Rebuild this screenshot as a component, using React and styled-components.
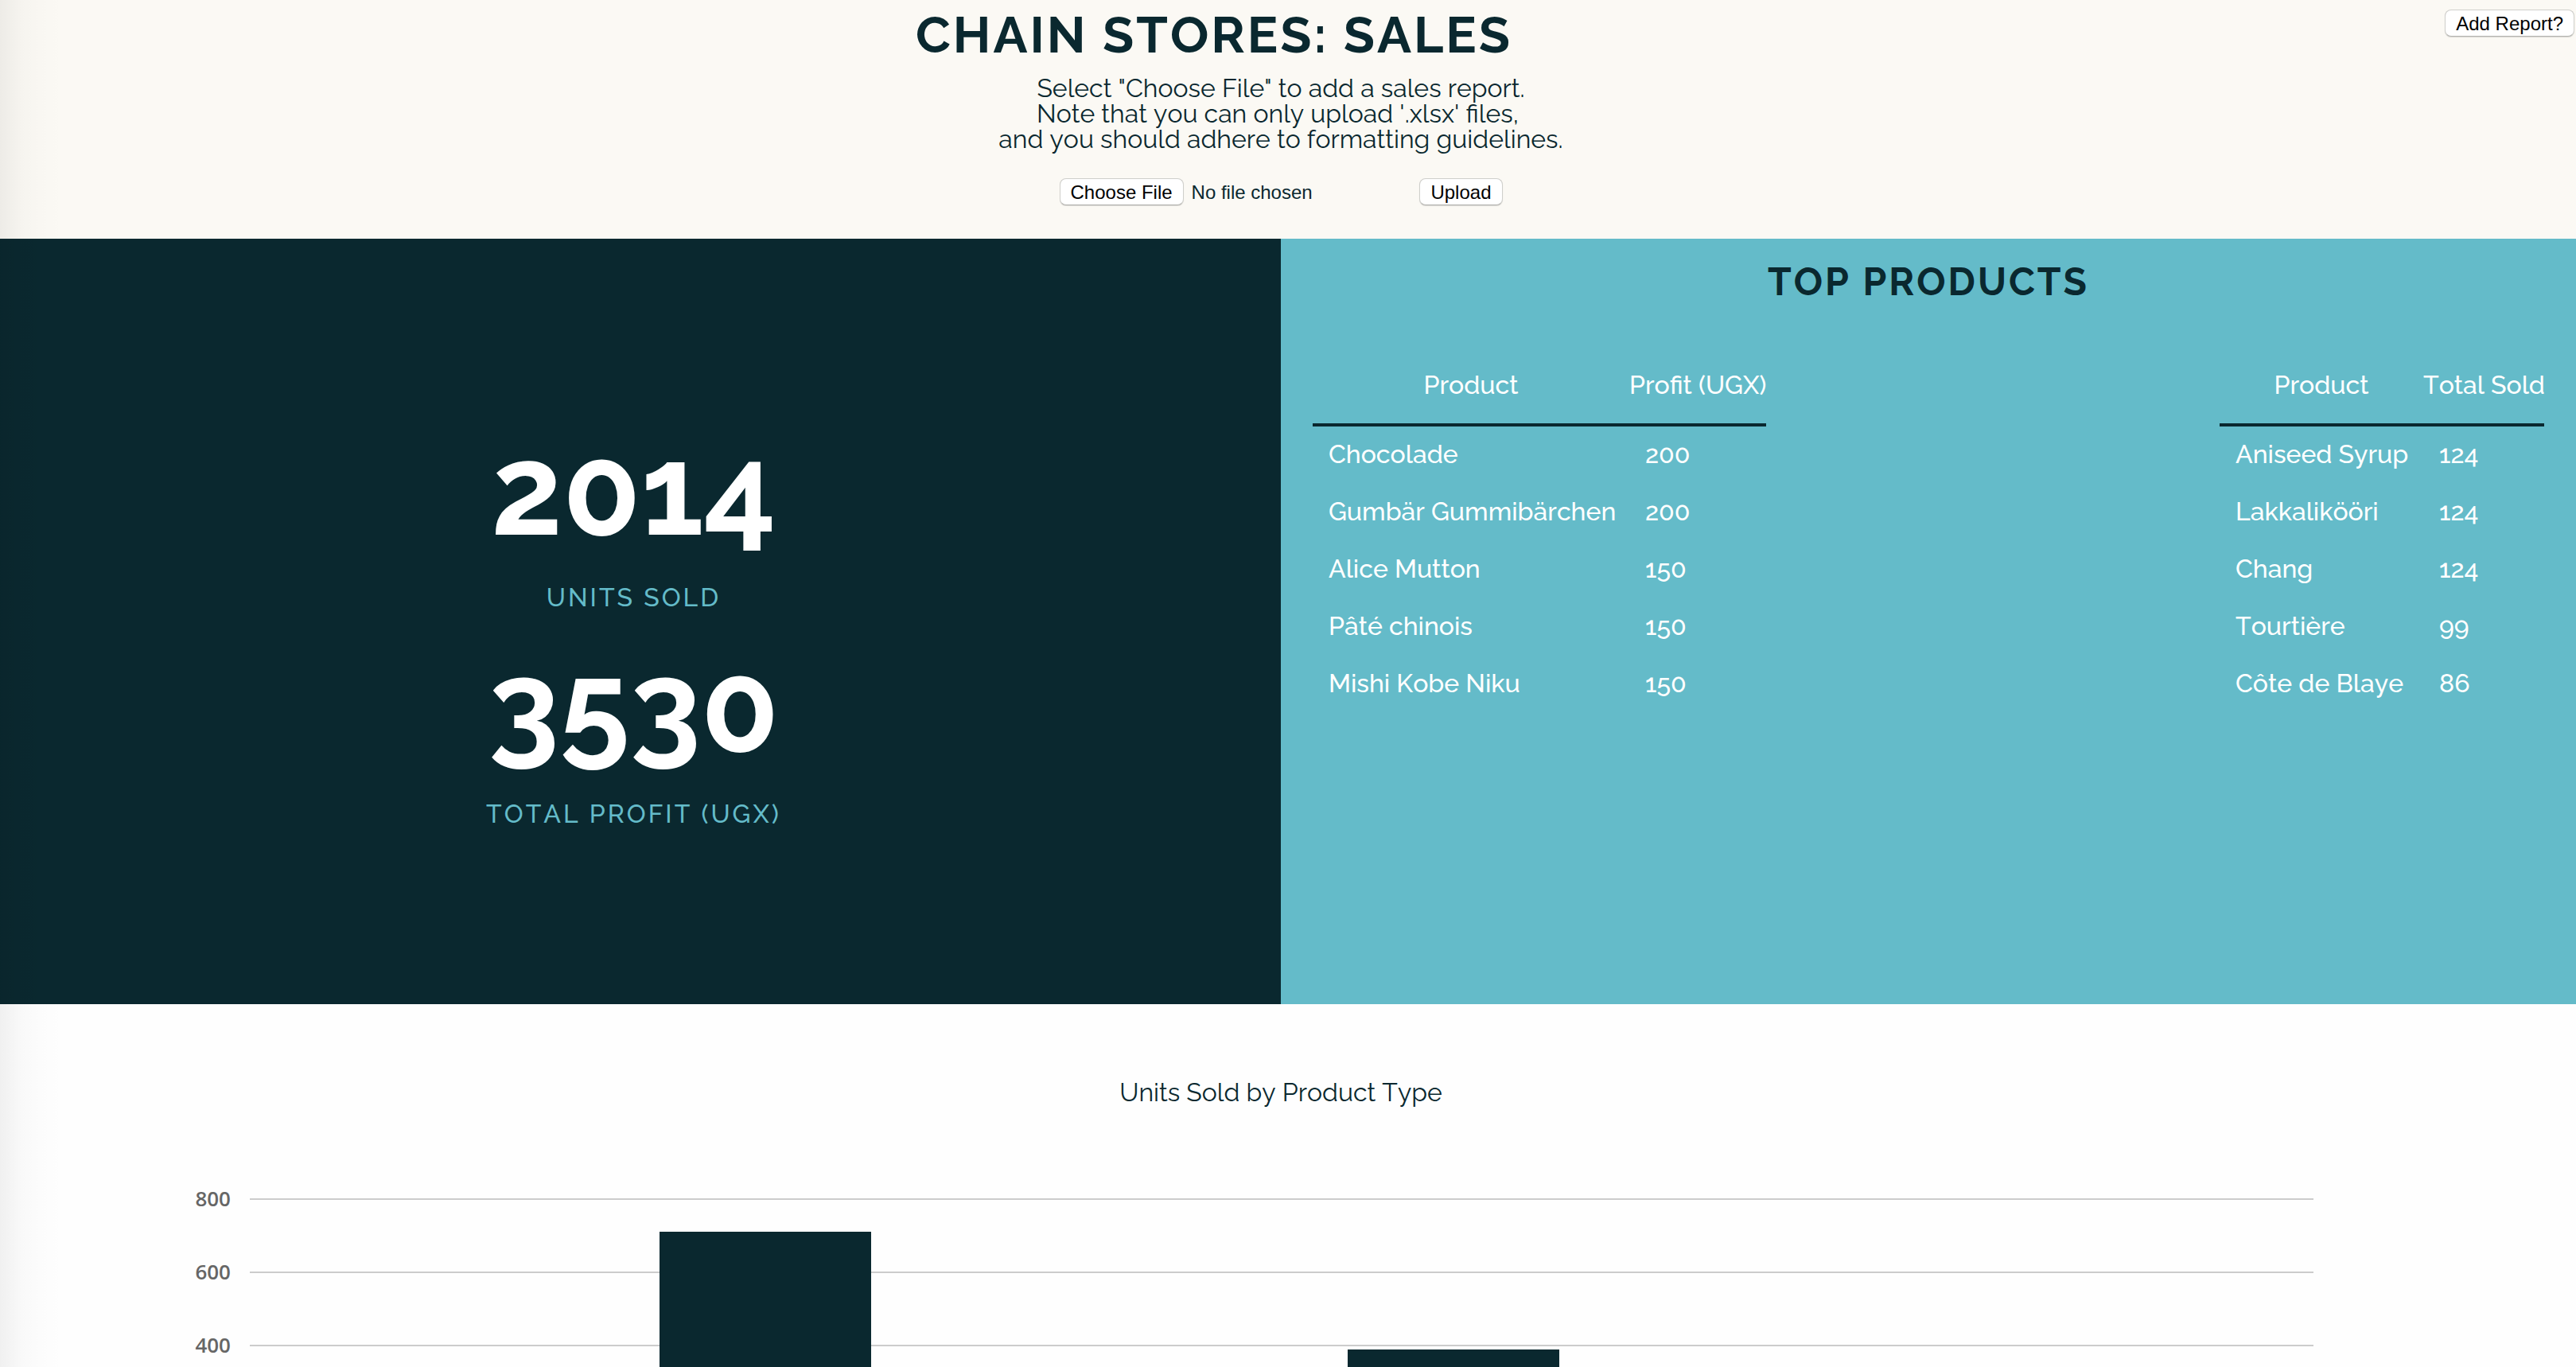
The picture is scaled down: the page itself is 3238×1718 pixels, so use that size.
import React from "react";
import styled, { createGlobalStyle } from "styled-components";

const color = {
  ink: "#0a282f",
  teal: "#64bbc9",
  cream: "#fbf9f4",
  paper: "#fefefe",
};

const brand = `Raleway, Lato, "Open Sans", sans-serif`;
const system = `"Helvetica Neue", "Liberation Sans", Arial, sans-serif`;

const GlobalStyle = createGlobalStyle`
  *, *::before, *::after { box-sizing: border-box; }
  body {
    margin: 0;
    background: ${color.paper};
    color: ${color.ink};
    font-family: ${brand};
    font-size: 32px;
    line-height: 32px;
    font-kerning: none;
  }
`;

const Page = styled.div`
  position: relative;
  display: flex;
  flex-direction: column;
  height: 100vh;
  overflow: hidden;
`;

const EdgeShade = styled.div`
  position: absolute;
  inset: 0 auto 0 0;
  width: 80px;
  pointer-events: none;
  background: linear-gradient(
    to right,
    rgba(0, 0, 0, 0.055),
    rgba(0, 0, 0, 0.02) 35%,
    rgba(0, 0, 0, 0.006) 65%,
    transparent
  );
`;

const Header = styled.header`
  flex: none;
  display: grid;
  align-items: start;
  height: 300px;
  background: ${color.cream};
`;

const Intro = styled.div`
  grid-area: 1 / 1;
  display: flex;
  flex-direction: column;
  align-items: center;
  padding: 12px 18px 0 0;
`;

const Title = styled.h1`
  margin: 0 168px 19px 0;
  font-size: 64px;
  line-height: 64px;
  font-weight: 700;
  letter-spacing: 3px;
  text-transform: uppercase;
`;

const Note = styled.p`
  margin: 0 0 33px;
  text-align: center;
`;

const UploadForm = styled.form`
  display: flex;
  justify-content: space-between;
  align-items: center;
  width: 557px;
`;

const buttonLook = `
  height: 34px;
  margin: 0;
  padding: 1px 13px 0;
  border: 1px solid #cfcfcb;
  border-bottom-color: #b4b4b0;
  border-radius: 8px;
  background: #fff;
  box-shadow: 0 1px 1px rgba(0, 0, 0, 0.15);
  color: #000;
  font: 24px/30px ${system};
`;

const Button = styled.button`
  ${buttonLook}
`;

const FileInput = styled.input`
  width: 440px;
  color: ${color.ink};
  font: 24px/34px ${system};

  &::file-selector-button {
    ${buttonLook}
    margin-right: 10px;
  }
`;

const Corner = styled.div`
  grid-area: 1 / 1;
  justify-self: end;
  padding: 12px 2px 0 0;
  display: flex;
`;

const Summary = styled.section`
  flex: none;
  display: grid;
  grid-template-columns: 1610fr 1628fr;
  height: 962px;
`;

const Totals = styled.div`
  display: flex;
  flex-direction: column;
  align-items: center;
  gap: 41px;
  padding: 236px 17px 0 0;
  background: ${color.ink};
`;

const Figure = styled.div`
  display: flex;
  flex-direction: column;
  align-items: center;
  gap: 39px;
`;

const FigureValue = styled.strong`
  color: #fff;
  font-size: 160px;
  line-height: 160px;
  font-weight: 700;
`;

const FigureLabel = styled.span`
  color: ${color.teal};
  font-weight: 500;
  letter-spacing: 3px;
  text-transform: uppercase;
`;

const Top = styled.div`
  padding: 30px 40px 0;
  background: ${color.teal};
`;

const TopTitle = styled.h2`
  margin: 0 0 82px;
  font-size: 48px;
  line-height: 48px;
  font-weight: 700;
  letter-spacing: 3px;
  text-align: center;
  text-transform: uppercase;
`;

const Tables = styled.div`
  display: flex;
  justify-content: space-between;
  align-items: flex-start;
`;

const Table = styled.table`
  width: ${(p) => p.$width}px;
  table-layout: fixed;
  border-spacing: 0;
  color: #fff;
  font-weight: 500;
`;

const HeadCell = styled.th`
  width: ${(p) => (p.$width ? `${p.$width}px` : "auto")};
  padding: 8px 0 32px;
  border-bottom: 4px solid ${color.ink};
  font-weight: inherit;
  text-align: center;
  white-space: nowrap;
`;

const Cell = styled.td`
  padding: 19px 20px 21px;
  white-space: nowrap;
`;

const Chart = styled.section`
  flex: 1;
  min-height: 0;
  overflow: hidden;
  padding: 95px 330px 0 228px;
`;

const ChartTitle = styled.h3`
  margin: 0 0 101px;
  padding-left: 84px;
  font-size: 32px;
  line-height: 32px;
  font-weight: 400;
  text-align: center;
`;

const ChartBody = styled.div`
  display: grid;
  grid-template-columns: 62px 1fr;
  column-gap: 24px;
`;

const Axis = styled.div`
  display: flex;
  flex-direction: column;
  color: #666;
  font: 600 26px/32px "Open Sans", sans-serif;
  text-align: right;
`;

const Tick = styled.span`
  height: 92px;
`;

const Plot = styled.div`
  display: grid;
  padding-top: 16px;
`;

const Lines = styled.div`
  grid-area: 1 / 1;
`;

const Line = styled.div`
  height: 92px;
  border-top: 2px solid #ccc;
`;

const Bars = styled.div`
  grid-area: 1 / 1;
  display: grid;
  grid-template-columns: repeat(6, 1fr);
  justify-items: center;
  align-items: end;
  height: 368px;
`;

const Bar = styled.div`
  width: 266px;
  background: ${color.ink};
`;

const profitRows = [
  ["Chocolade", 200],
  ["Gumbär Gummibärchen", 200],
  ["Alice Mutton", 150],
  ["Pâté chinois", 150],
  ["Mishi Kobe Niku", 150],
];

const soldRows = [
  ["Aniseed Syrup", 124],
  ["Lakkalikööri", 124],
  ["Chang", 124],
  ["Tourtière", 99],
  ["Côte de Blaye", 86],
];

const ticks = [800, 600, 400];
const unitsByType = [260, 708, 215, 387, 240, 200];

function ProductTable({ measure, rows, width, nameWidth }) {
  return (
    <Table $width={width}>
      <thead>
        <tr>
          <HeadCell scope="col" $width={nameWidth}>Product</HeadCell>
          <HeadCell scope="col">{measure}</HeadCell>
        </tr>
      </thead>
      <tbody>
        {rows.map(([name, value]) => (
          <tr key={name}>
            <Cell>{name}</Cell>
            <Cell>{value}</Cell>
          </tr>
        ))}
      </tbody>
    </Table>
  );
}

export default function App() {
  return (
    <Page>
      <GlobalStyle />
      <Header>
        <Intro>
          <Title>Chain Stores: Sales</Title>
          <Note>
            Select "Choose File" to add a sales report.
            <br />
            Note that you can only upload '.xlsx' files,&nbsp;
            <br />
            and you should adhere to formatting guidelines.
          </Note>
          <UploadForm onSubmit={(e) => e.preventDefault()}>
            <FileInput type="file" accept=".xlsx" aria-label="Sales report" />
            <Button type="submit">Upload</Button>
          </UploadForm>
        </Intro>
        <Corner>
          <Button type="button">Add Report?</Button>
        </Corner>
      </Header>

      <Summary>
        <Totals>
          <Figure>
            <FigureValue>2014</FigureValue>
            <FigureLabel>Units Sold</FigureLabel>
          </Figure>
          <Figure>
            <FigureValue>3530</FigureValue>
            <FigureLabel>Total Profit (UGX)</FigureLabel>
          </Figure>
        </Totals>
        <Top>
          <TopTitle>Top Products</TopTitle>
          <Tables>
            <ProductTable measure="Profit (UGX)" rows={profitRows} width={570} nameWidth={398} />
            <ProductTable measure="Total Sold" rows={soldRows} width={408} nameWidth={256} />
          </Tables>
        </Top>
      </Summary>

      <Chart>
        <ChartTitle>Units Sold by Product Type</ChartTitle>
        <ChartBody>
          <Axis>
            {ticks.map((t) => (
              <Tick key={t}>{t}</Tick>
            ))}
          </Axis>
          <Plot>
            <Lines>
              {ticks.map((t) => (
                <Line key={t} />
              ))}
            </Lines>
            <Bars>
              {unitsByType.map((units, i) => (
                <Bar key={i} style={{ height: `${(units / 800) * 100}%` }} />
              ))}
            </Bars>
          </Plot>
        </ChartBody>
      </Chart>
      <EdgeShade />
    </Page>
  );
}
